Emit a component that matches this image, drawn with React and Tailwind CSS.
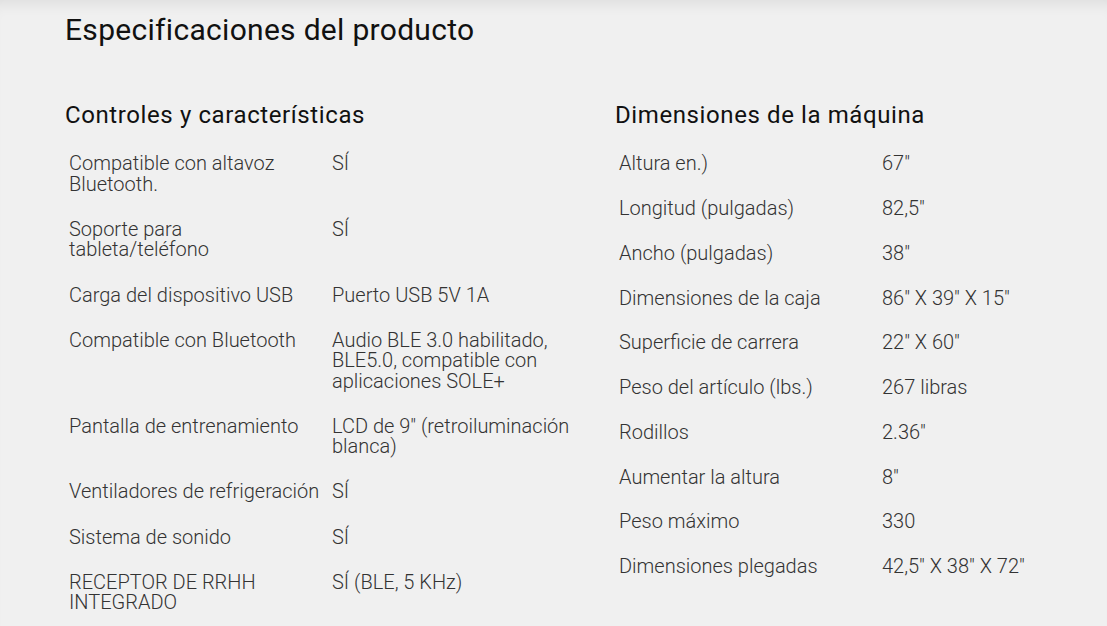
const CONTROLS = [
  ['Compatible con altavoz Bluetooth.', 'SÍ'],
  ['Soporte para tableta/teléfono', 'SÍ'],
  ['Carga del dispositivo USB', 'Puerto USB 5V 1A'],
  ['Compatible con Bluetooth', 'Audio BLE 3.0 habilitado, BLE5.0, compatible con aplicaciones SOLE+'],
  ['Pantalla de entrenamiento', 'LCD de 9" (retroiluminación blanca)'],
  ['Ventiladores de refrigeración', 'SÍ'],
  ['Sistema de sonido', 'SÍ'],
  ['RECEPTOR DE RRHH INTEGRADO', 'SÍ (BLE, 5 KHz)'],
]

const DIMENSIONS = [
  ['Altura en.)', '67"'],
  ['Longitud (pulgadas)', '82,5"'],
  ['Ancho (pulgadas)', '38"'],
  ['Dimensiones de la caja', '86" X 39" X 15"'],
  ['Superficie de carrera', '22" X 60"'],
  ['Peso del artículo (lbs.)', '267 libras'],
  ['Rodillos', '2.36"'],
  ['Aumentar la altura', '8"'],
  ['Peso máximo', '330'],
  ['Dimensiones plegadas', '42,5" X 38" X 72"'],
]

function SpecTable({ title, rows, className, cellPad = 'py-[12.4px]' }) {
  return (
    <section className={className}>
      <h3 className="text-[24px] leading-[28px] tracking-[0.6px] text-[#111]">{title}</h3>
      <div className="mt-[12px] max-w-[520px]">
        {rows.map(([label, value]) => (
          <div key={label} className="grid grid-cols-[263px_1fr] text-[20px] font-light leading-[20.4px] text-[#333]">
            <div className={`px-1 ${cellPad}`}>{label}</div>
            <div className={`px-1 ${cellPad}`}>{value}</div>
          </div>
        ))}
      </div>
    </section>
  )
}

export default function App() {
  return (
    <div
      className="min-h-[626px] bg-[#f0f0f0] px-[65px] pt-[12px] shadow-[inset_0_14px_14px_-10px_rgba(0,0,0,0.08)]"
      style={{ fontFamily: 'Roboto, "Noto Sans", sans-serif' }}
    >
      <h2 className="text-[30px] leading-[36px] tracking-[0.3px] text-[#111]">Especificaciones del producto</h2>
      <div className="mt-[53px] flex">
        <SpecTable title="Controles y características" rows={CONTROLS} className="w-[550px] shrink-0" />
        <SpecTable title="Dimensiones de la máquina" rows={DIMENSIONS} className="min-w-0 flex-1" cellPad="py-[12.2px]" />
      </div>
    </div>
  )
}
